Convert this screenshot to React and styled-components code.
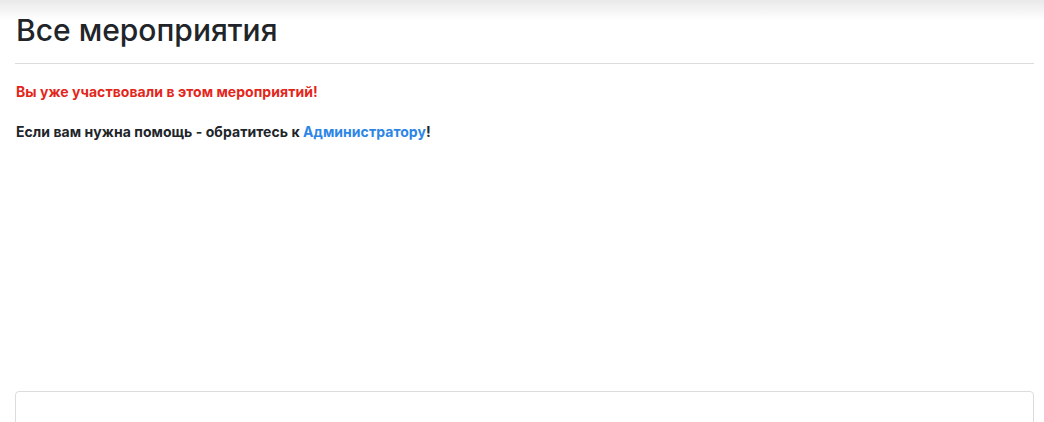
import styled, { createGlobalStyle } from "styled-components";

const GlobalStyle = createGlobalStyle`
  body {
    margin: 0;
    font-family: Inter, "Liberation Sans", Arial, sans-serif;
    color: #212529;
    background: linear-gradient(#e9e9e9, #ffffff 20px) no-repeat #ffffff;
  }
`;

const Page = styled.main`
  padding: 0 10px 0 15px;
`;

const Title = styled.h2`
  margin: 0;
  padding-top: 12px;
  font-size: 30px;
  font-weight: 500;
  line-height: 36px;
  padding-left: 1px;
  padding-bottom: 15px;
  border-bottom: 1px solid #dcdcdc;
`;

const Message = styled.p`
  margin: 0;
  padding-left: 1px;
  font-size: 14px;
  font-weight: 700;
  line-height: 16px;
  letter-spacing: 0.05px;
  color: ${(p) => p.color || "#212529"};
  margin-top: ${(p) => p.top}px;
`;

const AdminLink = styled.a`
  color: #2d86e6;
  text-decoration: none;
`;

const Card = styled.section`
  margin-top: 251px;
  height: 60px;
  border: 1px solid #dcdcdc;
  border-radius: 4px;
`;

const App = () => {
  return (
    <Page>
      <GlobalStyle />
      <Title>Все мероприятия</Title>
      <Message color="#e3261c" top={20}>
        Вы уже участвовали в этом мероприятий!
      </Message>
      <Message top={24}>
        Если вам нужна помощь - обратитесь к{" "}
        <AdminLink href="#">Администратору</AdminLink>!
      </Message>
      <Card />
    </Page>
  );
};

export default App;
